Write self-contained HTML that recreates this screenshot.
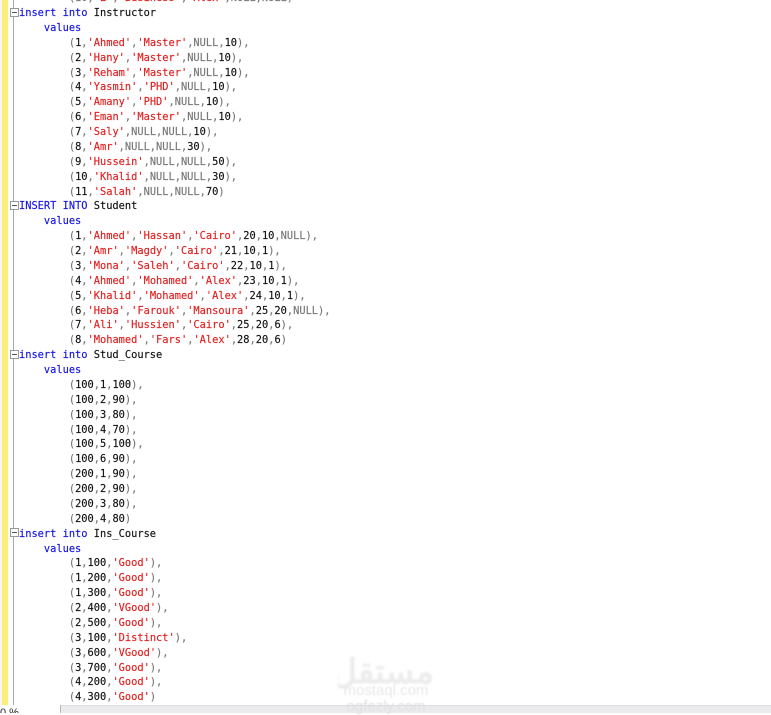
<!DOCTYPE html>
<html><head><meta charset="utf-8">
<style>
html,body{margin:0;padding:0;background:#fff;width:771px;height:713px;overflow:hidden}
#y{position:absolute;left:2px;top:0;width:6px;height:705px;background:#fdee7c}
#l1{position:absolute;left:0;top:0;width:2px;height:705px;background:#f4f4f0}
#g{position:absolute;left:13px;top:0;width:1px;height:705px;background:#a8a8a8}
.b{position:absolute;left:10px;width:7px;height:7px;border:1px solid #999;background:#fff}
.b:after{content:"";position:absolute;left:1px;top:3px;width:5px;height:1px;background:#555}
pre{position:absolute;left:19px;top:-8.8px;margin:0;font:10.35px/14.87px "DejaVu Sans Mono","Liberation Mono",monospace;color:#111;-webkit-text-stroke:.15px currentColor;filter:blur(.25px)}
i{font-style:normal;color:#1414e0}
s{text-decoration:none;color:#e02020}
u{text-decoration:none;color:#777}
#bar{position:absolute;left:0;top:705px;width:771px;height:8px;background:#ebebee;border-top:1px solid #dcdcdc;box-sizing:border-box}
#z{position:absolute;left:0;top:705px;width:60px;height:8px;background:#fff;border-right:1px solid #bbb;overflow:hidden;font:11px/16px "Liberation Sans",sans-serif;color:#222}
#w1{position:absolute;left:338px;top:651px;font:bold 34px/42px "Liberation Sans","Noto Sans CJK SC",sans-serif;color:#ececec;direction:rtl;width:96px;text-align:center;filter:blur(1px);overflow:hidden}
#w2{position:absolute;left:338px;top:683px;width:96px;font:15px/16px "Liberation Sans",sans-serif;color:#e8e8e8;text-align:center;filter:blur(.5px)}
#w3{position:absolute;left:338px;top:699px;width:96px;font:15px/16px "Liberation Sans",sans-serif;color:#e0e0e2;text-align:center;filter:blur(.5px)}
</style></head><body>
<div id="l1"></div><div id="y"></div><div id="g"></div>
<div class="b" style="top:8px"></div>
<div class="b" style="top:201px"></div>
<div class="b" style="top:350px"></div>
<div class="b" style="top:528px"></div>
<pre><u>        (10,</u><s>'E'</s><u>,</u><s>'Business'</s><u>,</u><s>'Alex'</s><u>,NULL,NULL)</u>
<i>insert into</i> Instructor
    <i>values</i>
        <u>(</u>1<u>,</u><s>'Ahmed'</s><u>,</u><s>'Master'</s><u>,NULL,</u>10<u>),</u>
        <u>(</u>2<u>,</u><s>'Hany'</s><u>,</u><s>'Master'</s><u>,NULL,</u>10<u>),</u>
        <u>(</u>3<u>,</u><s>'Reham'</s><u>,</u><s>'Master'</s><u>,NULL,</u>10<u>),</u>
        <u>(</u>4<u>,</u><s>'Yasmin'</s><u>,</u><s>'PHD'</s><u>,NULL,</u>10<u>),</u>
        <u>(</u>5<u>,</u><s>'Amany'</s><u>,</u><s>'PHD'</s><u>,NULL,</u>10<u>),</u>
        <u>(</u>6<u>,</u><s>'Eman'</s><u>,</u><s>'Master'</s><u>,NULL,</u>10<u>),</u>
        <u>(</u>7<u>,</u><s>'Saly'</s><u>,NULL,NULL,</u>10<u>),</u>
        <u>(</u>8<u>,</u><s>'Amr'</s><u>,NULL,NULL,</u>30<u>),</u>
        <u>(</u>9<u>,</u><s>'Hussein'</s><u>,NULL,NULL,</u>50<u>),</u>
        <u>(</u>10<u>,</u><s>'Khalid'</s><u>,NULL,NULL,</u>30<u>),</u>
        <u>(</u>11<u>,</u><s>'Salah'</s><u>,NULL,NULL,</u>70<u>)</u>
<i>INSERT INTO</i> Student
    <i>values</i>
        <u>(</u>1<u>,</u><s>'Ahmed'</s><u>,</u><s>'Hassan'</s><u>,</u><s>'Cairo'</s><u>,</u>20<u>,</u>10<u>,NULL),</u>
        <u>(</u>2<u>,</u><s>'Amr'</s><u>,</u><s>'Magdy'</s><u>,</u><s>'Cairo'</s><u>,</u>21<u>,</u>10<u>,</u>1<u>),</u>
        <u>(</u>3<u>,</u><s>'Mona'</s><u>,</u><s>'Saleh'</s><u>,</u><s>'Cairo'</s><u>,</u>22<u>,</u>10<u>,</u>1<u>),</u>
        <u>(</u>4<u>,</u><s>'Ahmed'</s><u>,</u><s>'Mohamed'</s><u>,</u><s>'Alex'</s><u>,</u>23<u>,</u>10<u>,</u>1<u>),</u>
        <u>(</u>5<u>,</u><s>'Khalid'</s><u>,</u><s>'Mohamed'</s><u>,</u><s>'Alex'</s><u>,</u>24<u>,</u>10<u>,</u>1<u>),</u>
        <u>(</u>6<u>,</u><s>'Heba'</s><u>,</u><s>'Farouk'</s><u>,</u><s>'Mansoura'</s><u>,</u>25<u>,</u>20<u>,NULL),</u>
        <u>(</u>7<u>,</u><s>'Ali'</s><u>,</u><s>'Hussien'</s><u>,</u><s>'Cairo'</s><u>,</u>25<u>,</u>20<u>,</u>6<u>),</u>
        <u>(</u>8<u>,</u><s>'Mohamed'</s><u>,</u><s>'Fars'</s><u>,</u><s>'Alex'</s><u>,</u>28<u>,</u>20<u>,</u>6<u>)</u>
<i>insert into</i> Stud_Course
    <i>values</i>
        <u>(</u>100<u>,</u>1<u>,</u>100<u>),</u>
        <u>(</u>100<u>,</u>2<u>,</u>90<u>),</u>
        <u>(</u>100<u>,</u>3<u>,</u>80<u>),</u>
        <u>(</u>100<u>,</u>4<u>,</u>70<u>),</u>
        <u>(</u>100<u>,</u>5<u>,</u>100<u>),</u>
        <u>(</u>100<u>,</u>6<u>,</u>90<u>),</u>
        <u>(</u>200<u>,</u>1<u>,</u>90<u>),</u>
        <u>(</u>200<u>,</u>2<u>,</u>90<u>),</u>
        <u>(</u>200<u>,</u>3<u>,</u>80<u>),</u>
        <u>(</u>200<u>,</u>4<u>,</u>80<u>)</u>
<i>insert into</i> Ins_Course
    <i>values</i>
        <u>(</u>1<u>,</u>100<u>,</u><s>'Good'</s><u>),</u>
        <u>(</u>1<u>,</u>200<u>,</u><s>'Good'</s><u>),</u>
        <u>(</u>1<u>,</u>300<u>,</u><s>'Good'</s><u>),</u>
        <u>(</u>2<u>,</u>400<u>,</u><s>'VGood'</s><u>),</u>
        <u>(</u>2<u>,</u>500<u>,</u><s>'Good'</s><u>),</u>
        <u>(</u>3<u>,</u>100<u>,</u><s>'Distinct'</s><u>),</u>
        <u>(</u>3<u>,</u>600<u>,</u><s>'VGood'</s><u>),</u>
        <u>(</u>3<u>,</u>700<u>,</u><s>'Good'</s><u>),</u>
        <u>(</u>4<u>,</u>200<u>,</u><s>'Good'</s><u>),</u>
        <u>(</u>4<u>,</u>300<u>,</u><s>'Good'</s><u>)</u></pre>
<div id="w1">مستقل</div>
<div id="w2">mostaql.com</div>
<div id="bar"></div>
<div id="z">0 %</div>
<div id="w3">ogfezly.com</div>
</body></html>
